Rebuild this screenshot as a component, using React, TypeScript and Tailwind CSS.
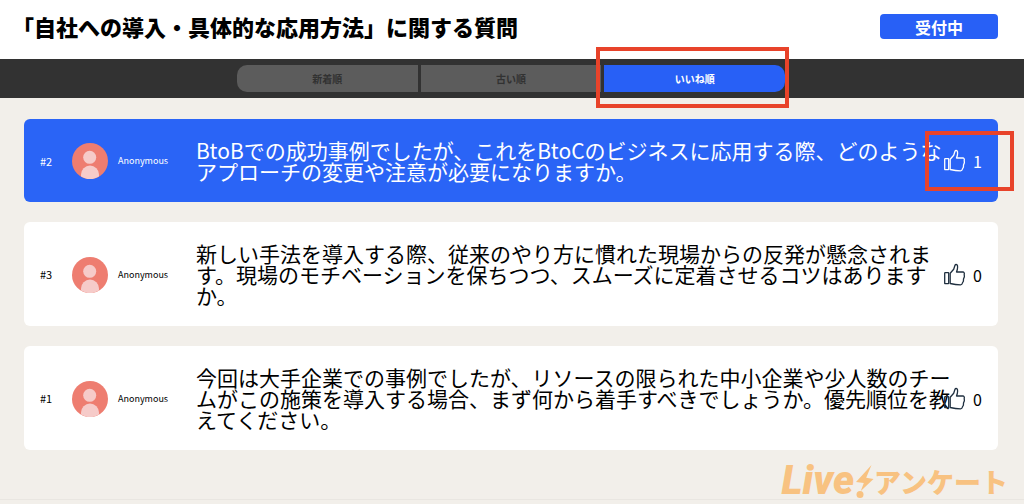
import { clsx } from 'clsx';

interface Question {
  id: number;
  author: string;
  body: string;
  likes: number;
  active?: boolean;
}

const questions: Question[] = [
  {
    id: 2,
    author: 'Anonymous',
    body: 'BtoBでの成功事例でしたが、これをBtoCのビジネスに応用する際、どのようなアプローチの変更や注意が必要になりますか。',
    likes: 1,
    active: true,
  },
  {
    id: 3,
    author: 'Anonymous',
    body: '新しい手法を導入する際、従来のやり方に慣れた現場からの反発が懸念されます。現場のモチベーションを保ちつつ、スムーズに定着させるコツはありますか。',
    likes: 0,
  },
  {
    id: 1,
    author: 'Anonymous',
    body: '今回は大手企業での事例でしたが、リソースの限られた中小企業や少人数のチームがこの施策を導入する場合、まず何から着手すべきでしょうか。優先順位を教えてください。',
    likes: 0,
  },
];

const sortTabs = ['新着順', '古い順', 'いいね順'];

function Avatar() {
  return (
    <svg viewBox="0 0 36 36" className="w-9 h-9 shrink-0" aria-hidden="true">
      <circle cx="18" cy="18" r="18" fill="#ee7d70" />
      <circle cx="17.7" cy="14.3" r="6.5" fill="#f6cbc9" />
      <path d="M9 33.6V31.5a9 9 0 0 1 18 0v2.1A18 18 0 0 1 9 33.6z" fill="#f6cbc9" />
    </svg>
  );
}

function ThumbIcon() {
  return (
    <svg viewBox="-1 0 22 24" className="w-[22px] h-6 shrink-0" fill="none" stroke="currentColor" strokeWidth="1.3" strokeLinejoin="round">
      <rect x="0.7" y="9.7" width="4" height="11" rx="0.5" />
      <path d="M6.2 20.5V10.2L9.7 6.2l1.3-4c.4-1 2.100-.9 2.400.2.4 1.800.1 4.200-.9 6.600l6.300-.1c1.200.1 1.800 1.300 1.400 2.400l.2 2.400-.9 2.400-.1 2.100-.9 1.600c-.3 1.300-.9 2-2 2.100-3.500 0-6.800-.5-10.300-1.400z" />
    </svg>
  );
}

function Highlight({ className }: { className: string }) {
  return <span className={clsx('absolute border-4 border-[#e8432a] pointer-events-none z-10', className)} />;
}

function QuestionCard({ question }: { question: Question }) {
  const { id, author, body, likes, active } = question;

  return (
    <li className={clsx('flex items-center rounded-md px-4 pt-[21px] pb-5', active ? 'bg-[#2a64f6] text-white' : 'bg-white text-black')}>
      <span className="w-8 shrink-0 text-[11px]">#{id}</span>
      <Avatar />
      <span className="w-[78px] shrink-0 ml-2.5 text-[9px]">{author}</span>
      <p className="flex-1 min-w-0 text-[21px] leading-[21px]">{body}</p>
      <button
        type="button"
        aria-label={`いいね ${likes}`}
        className={clsx('relative -ml-3 flex items-center gap-2 text-base', !active && 'text-[#1f2f3f]')}
      >
        <ThumbIcon />
        <span className={clsx(!active && 'text-black')}>{likes}</span>
        {active && <Highlight className="-left-[18px] -right-8 -top-[18px] -bottom-[18px]" />}
      </button>
    </li>
  );
}

function Logo() {
  return (
    <div className="flex items-center text-[#f8c281] leading-none">
      <span className="font-[Roboto,sans-serif] font-black italic text-[40px] leading-9">Live</span>
      <svg viewBox="0 0 20 36" className="w-5 h-9" fill="currentColor" aria-hidden="true">
        <path d="M17.5 2 2 19l7.8 1L6.8 28 19.5 16l-7.3-1.2z" />
        <circle cx="6" cy="31.5" r="3.5" />
      </svg>
      <span className="font-black text-[27px]">アンケート</span>
    </div>
  );
}

export default function App() {
  return (
    <div className="min-h-screen flex flex-col bg-[#f2efea] text-black font-['Noto_Sans_CJK_JP',sans-serif]">
      <header className="flex items-start justify-between bg-white pl-3 pr-[26px] pt-3.5 pb-5">
        <h1 className="text-[22px] leading-6 font-black">「自社への導入・具体的な応用方法」に関する質問</h1>
        <button type="button" className="w-[118px] h-[25px] rounded-sm bg-[#2860f6] text-white text-base leading-6 font-bold">
          受付中
        </button>
      </header>

      <nav className="flex justify-center bg-[#323232] px-6 py-1.5">
        <div className="flex gap-[3px] w-full max-w-[548px] -ml-0.5">
          {sortTabs.map((label, i) => {
            const selected = i === sortTabs.length - 1;
            return (
              <button
                key={label}
                type="button"
                aria-pressed={selected}
                className={clsx(
                  'relative flex-1 h-[27px] text-[10px] font-bold',
                  i === 0 && 'rounded-l-[10px]',
                  selected ? 'rounded-r-[10px] bg-[#2860f6] text-white' : 'bg-[#5c5c5c] text-[#323232]',
                )}
              >
                {label}
                {selected && <Highlight className="-left-2 -right-1 -top-[18px] -bottom-4" />}
              </button>
            );
          })}
        </div>
      </nav>

      <main className="flex-1 pl-6 pr-[26px] pt-[21px]">
        <ul className="flex flex-col gap-5">
          {questions.map((question) => (
            <QuestionCard key={question.id} question={question} />
          ))}
        </ul>
      </main>

      <footer className="flex justify-end pr-4 border-b border-[#e9e6e1] mb-1">
        <Logo />
      </footer>
    </div>
  );
}
